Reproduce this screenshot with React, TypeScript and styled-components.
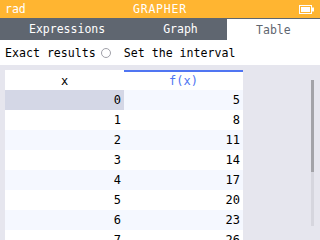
import React from 'react';
import styled, {createGlobalStyle} from 'styled-components';

const FONT = '"DejaVu Sans Mono", "Liberation Mono", monospace';

const GlobalStyle = createGlobalStyle`
  html, body {
    margin: 0;
    padding: 0;
    background: #e6e6ee;
  }
`;

const rows = [0, 1, 2, 3, 4, 5, 6, 7].map(x => ({x, y: 3 * x + 5}));

function Battery() {
    return (
        <svg width="16" height="9" viewBox="0 0 16 9">
            <rect x="0.5" y="0.5" width="12" height="8" fill="none" stroke="#fff" strokeWidth="1"/>
            <rect x="2" y="2" width="9" height="5" fill="#fff"/>
            <rect x="13" y="2.5" width="2" height="4" fill="#fff"/>
        </svg>
    );
}

export default function App() {
    return (
        <Screen>
            <GlobalStyle/>
            <TitleBar>
                <TitleLeft>rad</TitleLeft>
                <TitleCenter>GRAPHER</TitleCenter>
                <TitleRight><Battery/></TitleRight>
            </TitleBar>
            <Tabs>
                <Tab>Expressions</Tab>
                <Tab>Graph</Tab>
                <Tab selected grow>Table</Tab>
            </Tabs>
            <OptionsRow>
                <OptionLabel>Exact results</OptionLabel>
                <Radio/>
                <OptionLabel>Set the interval</OptionLabel>
            </OptionsRow>
            <Content>
                <Table>
                    <HeaderCell>x</HeaderCell>
                    <HeaderCell active>f(x)</HeaderCell>
                    {rows.map((row, index) => (
                        <React.Fragment key={row.x}>
                            <Cell shaded={index % 2 === 0} selected={index === 0}>{row.x}</Cell>
                            <Cell shaded={index % 2 === 0}>{row.y}</Cell>
                        </React.Fragment>
                    ))}
                </Table>
                <ScrollTrack>
                    <ScrollThumb/>
                </ScrollTrack>
            </Content>
        </Screen>
    );
}

type TabProps = {
    selected?: boolean,
    grow?: boolean
}

type CellProps = {
    shaded?: boolean,
    selected?: boolean
}

const Screen = styled.div`
  width: 320px;
  height: 240px;
  overflow: hidden;
  display: flex;
  flex-direction: column;
  background: #e6e6ee;
  font-family: ${FONT};
`;

const TitleBar = styled.div`
  height: 18px;
  flex-shrink: 0;
  display: grid;
  grid-template-columns: 1fr auto 1fr;
  align-items: center;
  background: #ffb531;
  color: #ffffff;
  font-size: 11.5px;
`;

const TitleLeft = styled.span`
  padding-left: 5px;
`;

const TitleCenter = styled.span`
  letter-spacing: 0.8px;
`;

const TitleRight = styled.span`
  justify-self: end;
  padding-right: 5px;
  display: flex;
`;

const Tabs = styled.div`
  height: 22px;
  flex-shrink: 0;
  display: flex;
  background: #5f6670;
`;

const Tab = styled.div<TabProps>`
  padding: 0 29px;
  ${({grow}) => grow && 'flex: 1;'}
  display: flex;
  align-items: center;
  justify-content: center;
  margin-top: ${({selected}) => selected ? '1px' : '0'};
  background: ${({selected}) => selected ? '#ffffff' : 'transparent'};
  color: ${({selected}) => selected ? '#5f6670' : '#ffffff'};
  font-size: 11.5px;
`;

const OptionsRow = styled.div`
  height: 25px;
  flex-shrink: 0;
  display: flex;
  align-items: center;
  padding-left: 5px;
  background: #ffffff;
`;

const OptionLabel = styled.span`
  font-size: 11.6px;
  color: #000000;
`;

const Radio = styled.span`
  box-sizing: border-box;
  width: 10px;
  height: 10px;
  margin: 0 13px 0 5px;
  border: 1px solid #a0a0a8;
  border-radius: 50%;
`;

const Content = styled.div`
  flex: 1;
  display: flex;
  align-items: flex-start;
  padding: 5px 0 0 5px;
`;

const Table = styled.div`
  display: grid;
  grid-template-columns: 119px 119px;
  grid-auto-rows: 20px;
  font-size: 12px;
`;

const HeaderCell = styled.div<{ active?: boolean }>`
  box-sizing: border-box;
  display: flex;
  align-items: center;
  justify-content: center;
  background: #ffffff;
  border-top: 2px solid ${({active}) => active ? '#5075f2' : '#ffffff'};
  color: ${({active}) => active ? '#5075f2' : '#000000'};
`;

const Cell = styled.div<CellProps>`
  display: flex;
  align-items: center;
  justify-content: flex-end;
  padding-right: 3px;
  color: #000000;
  background: ${({shaded, selected}) => selected ? '#d4d7e6' : shaded ? '#f5f8ff' : '#ffffff'};
`;

const ScrollTrack = styled.div`
  width: 3px;
  height: 146px;
  margin: 10px 6px 0 auto;
  background: #d6d6de;
`;

const ScrollThumb = styled.div`
  height: 92px;
  background: #a3a3a8;
`;
